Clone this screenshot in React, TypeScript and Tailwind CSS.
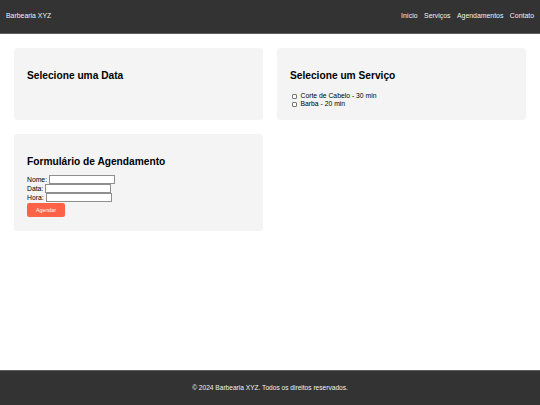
import React from "react";

const navItems = ["Início", "Serviços", "Agendamentos", "Contato"];

export default function App() {
  return (
    <div className="min-h-screen flex flex-col bg-white font-['Liberation_Sans',Arial,sans-serif] text-black">
      <header className="h-[34px] bg-[#333] border-b border-[#5e5e5e] flex items-center justify-between px-[6px] text-[#f2f2f2] text-[6.9px]">
        <span>Barbearia XYZ</span>
        <nav className="flex gap-[6.5px]">
          {navItems.map((item) => (
            <a key={item} href="#" className="text-[#f2f2f2]">
              {item}
            </a>
          ))}
        </nav>
      </header>

      <main className="flex-1 p-[14px]">
        <div className="grid grid-cols-2 gap-[14px] items-start">
          <section className="bg-[#f4f4f4] rounded-[3px] px-[13px] pt-[14px] h-[72px]">
            <h2 className="text-[10.2px] leading-[12px] font-bold mt-[8px] mb-[8px]">Selecione uma Data</h2>
          </section>

          <section className="bg-[#f4f4f4] rounded-[3px] px-[13px] pt-[14px] h-[72px]">
            <h2 className="text-[10.2px] leading-[12px] font-bold mt-[8px] mb-[10px]">Selecione um Serviço</h2>
            <div className="flex flex-col text-[6.8px] leading-[8.2px]">
              <label className="flex items-center">
                <span className="w-[5px] h-[5px] border border-[#767676] rounded-[1px] bg-white ml-[2px] mr-[3.5px]" />
                Corte de Cabelo - 30 min
              </label>
              <label className="flex items-center">
                <span className="w-[5px] h-[5px] border border-[#767676] rounded-[1px] bg-white ml-[2px] mr-[3.5px]" />
                Barba - 20 min
              </label>
            </div>
          </section>

          <section className="bg-[#f4f4f4] rounded-[3px] px-[13px] pt-[14px] pb-[14px]">
            <h2 className="text-[10.2px] leading-[12px] font-bold mt-[8px] mb-[7px]">Formulário de Agendamento</h2>
            <form className="flex flex-col items-start text-[6.8px] leading-[9px]">
              <label className="flex items-center">
                Nome:
                <span className="ml-[2px] w-[66px] h-[9px] border border-[#8f8f8f] bg-white" />
              </label>
              <label className="flex items-center">
                Data:
                <span className="ml-[2px] w-[66px] h-[9px] border border-[#8f8f8f] bg-white" />
              </label>
              <label className="flex items-center">
                Hora:
                <span className="ml-[2px] w-[66px] h-[9px] border border-[#8f8f8f] bg-white" />
              </label>
              <button
                type="button"
                className="mt-[1px] w-[38px] h-[14px] bg-[#ff6347] text-white text-[5.3px] rounded-[2px] flex items-center justify-center"
              >
                Agendar
              </button>
            </form>
          </section>
        </div>
      </main>

      <footer className="h-[35px] bg-[#333] border-t border-[#5e5e5e] flex items-center justify-center text-[#f2f2f2] text-[6.6px]">
        © 2024 Barbearia XYZ. Todos os direitos reservados.
      </footer>
    </div>
  );
}
